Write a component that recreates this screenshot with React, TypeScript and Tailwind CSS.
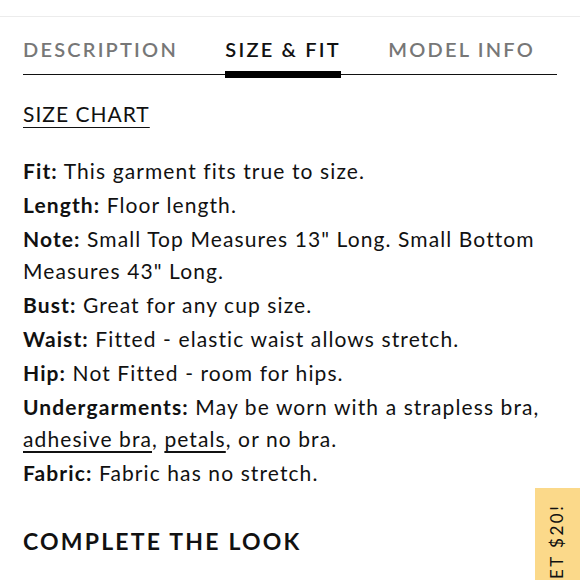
export default function App() {
  const rows: { label: string; text: React.ReactNode }[] = [
    { label: "Fit:", text: "This garment fits true to size." },
    { label: "Length:", text: "Floor length." },
    { label: "Note:", text: 'Small Top Measures 13" Long. Small Bottom Measures 43" Long.' },
    { label: "Bust:", text: "Great for any cup size." },
    { label: "Waist:", text: "Fitted - elastic waist allows stretch." },
    { label: "Hip:", text: "Not Fitted - room for hips." },
    {
      label: "Undergarments:",
      text: (
        <>
          May be worn with a strapless bra, <span className="underline underline-offset-[4px]">adhesive bra</span>,{" "}
          <span className="underline underline-offset-[4px]">petals</span>, or no bra.
        </>
      ),
    },
    { label: "Fabric:", text: "Fabric has no stretch." },
  ];

  return (
    <div className="relative w-[580px] h-[580px] overflow-hidden bg-white font-['Lato',sans-serif] text-[#111]">
      <div className="h-[17px] border-b border-[#ececec]" />

      {/* Tabs */}
      <div className="mx-[23px] mt-[17px] flex justify-between border-b border-[#111] text-[20px] font-semibold tracking-[2.2px]">
        <div className="pb-[10px] text-[#777]">DESCRIPTION</div>
        <div className="relative pb-[10px] text-[#111]">
          SIZE &amp; FIT
          <div className="absolute left-0 right-0 -bottom-[4px] h-[7px] bg-black" />
        </div>
        <div className="pb-[10px] pr-[22px] text-[#777]">MODEL INFO</div>
      </div>

      <div className="px-[23px]">
        <div className="mt-[25px] text-[21px] leading-[28px] tracking-[1px] underline underline-offset-[5px] decoration-1">
          SIZE CHART
        </div>

        <div className="mt-[27px] text-[21px] leading-[32px] tracking-[1.1px]">
          {rows.map((r) => (
            <p key={r.label} className="mb-[2px]">
              <span className="font-bold">{r.label}</span> {r.text}
            </p>
          ))}
        </div>

        <h2 className="mt-[35px] text-[23px] font-bold tracking-[2.2px]">COMPLETE THE LOOK</h2>
      </div>

      {/* Rewards tab */}
      <div className="absolute left-[535px] top-[488px] w-[60px] h-[140px] bg-[#fbd98a]">
        <div className="absolute left-[9px] top-[0px] origin-top-left -rotate-90 translate-y-[106px] whitespace-nowrap text-[17px] tracking-[2.5px]">
          GET $20!
        </div>
      </div>
    </div>
  );
}
